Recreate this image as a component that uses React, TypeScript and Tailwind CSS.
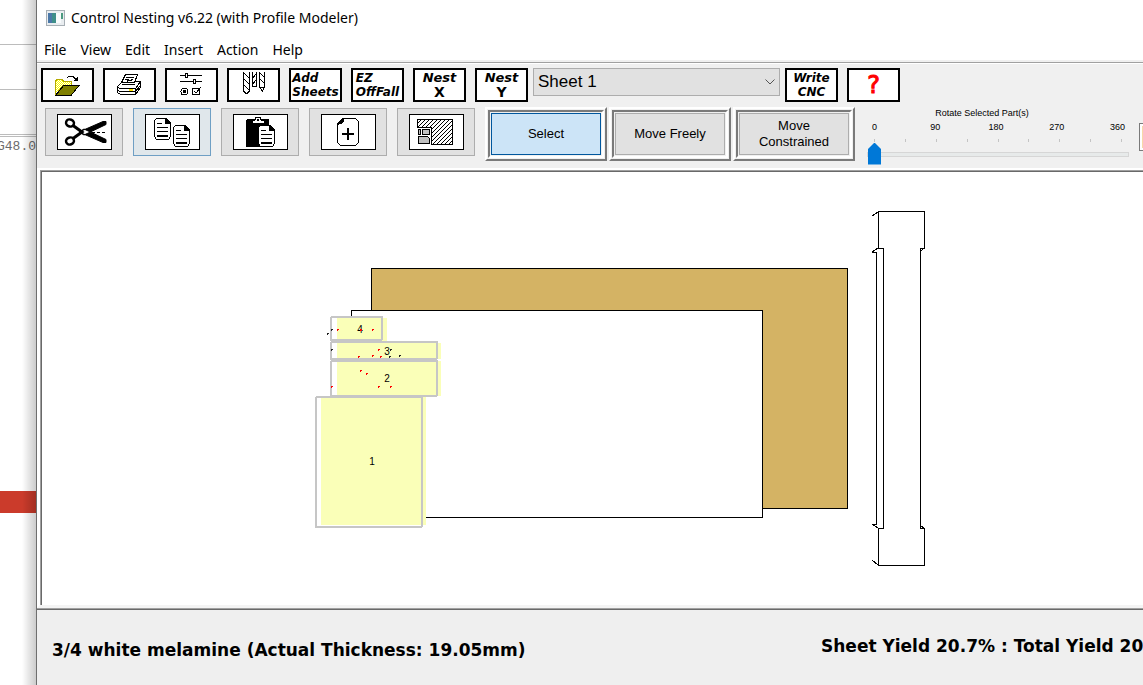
import { useState } from "react";
import type { ReactNode } from "react";

const MENUS = ["File", "View", "Edit", "Insert", "Action", "Help"];
const DEGREES = ["0", "90", "180", "270", "360"];
const TICKS = [0, 1, 2, 3, 4, 5, 6, 7, 8];

const toolBtn = "flex h-[34px] w-[53px] shrink-0 items-center justify-center border-2 border-black bg-white";
const word = "flex flex-col font-['DejaVu_Sans',sans-serif] leading-[14px] font-bold italic";

function AppIcon() {
  return (
    <svg width="19" height="16" viewBox="0 0 19 16" className="shrink-0">
      <rect x="0.5" y="0.5" width="18" height="15" fill="#e9edf0" stroke="#a7afb5" />
      <rect x="2" y="3" width="8" height="10" fill="#3f8f8a" />
      <path d="M2 3h4v10h-4z" fill="#4b78a8" />
      <path d="M10 3h5v10h-5z" fill="#f8fbfc" />
      <rect x="15" y="3" width="2" height="6" fill="#4c9a80" />
    </svg>
  );
}

function OpenIcon() {
  return (
    <svg width="49" height="30" viewBox="0 0 49 30" fill="none" stroke="#000" shapeRendering="crispEdges">
      <defs>
        <pattern id="dither" width="2" height="2" patternUnits="userSpaceOnUse">
          <rect width="2" height="2" fill="#fff" stroke="none" />
          <path d="M0 0h1v1h-1zM1 1h1v1h-1z" fill="#ff0" stroke="none" />
        </pattern>
      </defs>
      <path d="M12.5 25V11l2-2h4l2 2h8v4h-8z" fill="url(#dither)" stroke="#b5aa00" />
      <path d="M12.5 25.5l8-10h15.5l-8 10z" fill="#808000" />
      <path d="M24 8l2-2h4l3 4" />
      <path d="M30 11h5V6z" fill="#000" stroke="none" />
    </svg>
  );
}

function PrintIcon() {
  return (
    <svg width="49" height="30" viewBox="0 0 49 30" fill="none" stroke="#000" shapeRendering="crispEdges">
      <path d="M12.5 16.5l5-5h18v6l-5 7h-15l-3-2z" fill="#fff" />
      <path d="M12.5 16.5l2 2h16l5-7M30.5 18.5v6M12.5 19.5l2 2h16l5-6" />
      <path d="M16.5 12.5l4-8h12l-3 8z" fill="#fff" />
      <path d="M21 7.5h8M20 9.5h4M26 9.5h2M17 14.5h13M19 12.5h3l1-2h4" />
      <rect x="24" y="19" width="4" height="2" fill="#ffe600" stroke="none" />
    </svg>
  );
}

function OptionsIcon() {
  return (
    <svg width="49" height="30" viewBox="0 0 49 30" fill="none" stroke="#000" shapeRendering="crispEdges">
      <path d="M13 5.5h22M13 11.5h22" />
      <rect x="18.5" y="3.5" width="2" height="4" fill="#fff" />
      <rect x="26.5" y="9.5" width="2" height="4" fill="#fff" />
      <circle cx="17.5" cy="21.5" r="3.5" />
      <rect x="16" y="20" width="3" height="3" fill="#000" stroke="none" />
      <rect x="25.5" y="18.5" width="7" height="6" />
      <path d="M27 21l2 2 5-6" />
    </svg>
  );
}

function DrillIcon() {
  return (
    <svg width="49" height="30" viewBox="0 0 49 30" fill="none" stroke="#000" shapeRendering="crispEdges">
      <path d="M14.5 2v19l2 2h2l2-2V2M23.5 2v14.5h4V2M30.5 2v15l3 4 2-4V2" />
      <path d="M15 3l5 5M15 9l5 5M15 15l5 5M27 4l-4 5M27 10l-4 5M31 3l4 4M31 9l4 4M31 17h4" />
    </svg>
  );
}

function CutIcon() {
  return (
    <svg width="53" height="34" viewBox="0 0 53 34" fill="none" stroke="#000">
      <ellipse cx="12" cy="8" rx="4" ry="3.500" strokeWidth="2.500" transform="rotate(20 12 8)" />
      <ellipse cx="12" cy="26" rx="4" ry="3.500" strokeWidth="2.500" transform="rotate(-20 12 26)" />
      <path d="M15 10.500L24 17L15 23.500" strokeWidth="3" />
      <path d="M21 17L45 6.500h3v3L26 20zM21 17L45 27.500h3v-3L26 14z" fill="#000" strokeWidth="1" />
      <path d="M34 17.5h15" strokeDasharray="3 2" shapeRendering="crispEdges" />
    </svg>
  );
}

function Page({ x, y }: { x: number; y: number }) {
  return (
    <g transform={`translate(${x} ${y})`}>
      <path d="M2.5 .5h9l5 5v13l-2 3h-12l-2-3v-16z" fill="#fff" />
      <path d="M11 0v6h6v-1l-5-5z" fill="#000" stroke="none" />
      <path d="M3 5.5h5M3 9.5h11M3 13.5h11M3 17.5h11" />
      <path d="M3 18.5h11" />
    </g>
  );
}

function CopyIcon() {
  return (
    <svg width="53" height="34" viewBox="0 0 53 34" fill="none" stroke="#000" shapeRendering="crispEdges">
      <Page x={8} y={3} />
      <Page x={27} y={10} />
    </svg>
  );
}

function PasteIcon() {
  return (
    <svg width="53" height="34" viewBox="0 0 53 34" fill="none" stroke="#000" shapeRendering="crispEdges">
      <rect x="12" y="4" width="23" height="28" rx="2" fill="#000" stroke="none" />
      <path d="M18 8.5V5h3l1-3h4l1 3h3v3.5z" fill="#fff" />
      <rect x="23" y="4" width="2" height="2" fill="#000" stroke="none" />
      <Page x={24} y={10} />
    </svg>
  );
}

function NewPartIcon() {
  return (
    <svg width="53" height="34" viewBox="0 0 53 34" fill="none" stroke="#000" shapeRendering="crispEdges">
      <path d="M20.5 3.5h13l3 3v21l-3 3h-15l-3-3V8.5z" />
      <path d="M15 10V8l5-5h2v3l-3 3z" fill="#000" stroke="none" />
      <path d="M20 19h12M26 13v12" strokeWidth="2" />
    </svg>
  );
}

function OffcutIcon() {
  return (
    <svg width="53" height="34" viewBox="0 0 53 34" fill="none" stroke="#000" shapeRendering="crispEdges">
      <defs>
        <pattern id="hatch" width="4" height="4" patternUnits="userSpaceOnUse">
          <path d="M0 3h1v1h-1zM1 2h1v1h-1zM2 1h1v1h-1zM3 0h1v1h-1z" fill="#000" stroke="none" />
        </pattern>
      </defs>
      <path d="M7.5 4.5h35v25h-21v-17h-14z" fill="url(#hatch)" />
      <rect x="8.5" y="14.5" width="2" height="5" fill="#c0c0c0" />
      <rect x="12.5" y="14.5" width="7" height="5" fill="#c0c0c0" />
      <path d="M8.5 21.5h9l2 2v5h-11z" fill="#c0c0c0" />
    </svg>
  );
}

function IconButton({ label, hot, children }: { label: string; hot?: boolean; children: ReactNode }) {
  return (
    <button
      aria-label={label}
      className={
        "flex h-12 w-[78px] shrink-0 items-center justify-center border " +
        (hot ? "border-[#6f9fc4] bg-[#e0e7eb]" : "border-[#adadad] bg-[#e1e1e1]")
      }
    >
      <span className="block h-9 w-[55px] border border-black bg-white">{children}</span>
    </button>
  );
}

function ModeButton({ label, active, onClick }: { label: string; active: boolean; onClick: () => void }) {
  return (
    <div className="h-[54px] w-[122px] shrink-0 border-2 border-t-white border-r-[#7a7a7a] border-b-[#7a7a7a] border-l-white p-px">
      <div className="h-full border-2 border-t-[#7a7a7a] border-r-white border-b-white border-l-[#7a7a7a] p-px">
        <button
          aria-pressed={active}
          onClick={onClick}
          className={
            "h-full w-full border px-4 text-[13px] leading-4 " +
            (active ? "border-[#00579e] bg-[#cce4f7]" : "border-[#adadad] bg-[#e1e1e1]")
          }
        >
          {label}
        </button>
      </div>
    </div>
  );
}

const PARTS = [
  { id: 1, x: 274, y: 225, w: 106, h: 130, fx: 279, fw: 105, fy: 224, fh: 129 },
  { id: 2, x: 289, y: 189, w: 106, h: 35, fx: 295, fw: 104, fy: 189, fh: 35 },
  { id: 3, x: 289, y: 170, w: 106, h: 17, fx: 295, fw: 104, fy: 171, fh: 16 },
  { id: 4, x: 289, y: 145, w: 51, h: 23, fx: 295, fw: 50, fy: 146, fh: 23 },
];

// drill points, red = from face
const HOLES = [
  [295, 157], [330, 157], [316, 184], [330, 183], [336, 177], [338, 184],
  [318, 198], [324, 201], [289, 214], [336, 214], [348, 214],
];
const DARK_HOLES = [[285, 161], [289, 157], [289, 177], [347, 184], [348, 177], [357, 183]];

function NestCanvas() {
  return (
    <svg className="block h-[433px] w-full bg-white" fill="none" stroke="#000" shapeRendering="crispEdges">
      <rect x="329.5" y="96.5" width="476" height="240" fill="#d4b364" />
      <rect x="309.5" y="138.5" width="411" height="207" fill="#fff" />
      {PARTS.map(p => (
        <g key={p.id}>
          <rect x={p.x} y={p.y} width={p.fx + p.fw - p.x} height={p.h} fill="#fff" stroke="none" />
          <rect x={p.fx} y={p.fy} width={p.fw} height={p.fh} fill="#faffb8" stroke="none" />
          <rect x={p.x} y={p.y} width={p.w} height={p.h} stroke="#c6c6c6" strokeWidth="2" rx="1" />
        </g>
      ))}
      {HOLES.map(([x, y]) => (
        <path key={`${x}-${y}`} d={`M${x} ${y}h2v1h-1v1h-1z`} fill="#f00" stroke="none" />
      ))}
      {DARK_HOLES.map(([x, y]) => (
        <path key={`${x}-${y}`} d={`M${x} ${y}h2v1h-1v1h-1z`} fill="#222" stroke="none" />
      ))}
      <g fill="#000" stroke="none" fontSize="10" textAnchor="middle">
        <text x="330" y="293">1</text>
        <text x="345" y="210">2</text>
        <text x="345" y="183">3</text>
        <text x="318" y="161">4</text>
      </g>
      <path d="M318 157h2v2h-2z" fill="#f00" stroke="none" />
      <path d="M836.5 39.5h46v37h-4v280h4v37h-46v-37h5v-280h-5zM834.5 80v273" />
      <path d="M830 44l6-4M830 80.5h5M830 80l6-4M830 352.5h5M830 352l6 4M830 388l6 5M879 79l3-3M879 354l3 2" />
    </svg>
  );
}

export default function App() {
  const [mode, setMode] = useState("Select");
  const [angle, setAngle] = useState(0);

  return (
    <div className="flex min-h-screen w-full overflow-hidden bg-white font-['Liberation_Sans',Arial,sans-serif] text-black">
      {/* slice of the editor behind the window */}
      <aside className="relative flex w-9 shrink-0 flex-col overflow-hidden">
        <div className="h-[45px] border-b border-[#bcbcbc]" />
        <div className="h-[45px] border-b border-[#bcbcbc]" />
        <div className="h-[47px] border-b-3 border-double border-[#bcbcbc]" />
        <div className="flex h-5 items-center justify-end font-['Liberation_Mono',monospace] text-[13px] text-[#6b6b6b]">G48.0</div>
        <div className="mt-[334px] h-[22px] bg-[#cb3b2b]" />
        <div className="absolute inset-y-0 right-0 w-3.5 bg-linear-to-r from-transparent to-black/20" />
      </aside>

      <main className="flex min-w-0 flex-1 flex-col border-l border-[#6e6e6e] bg-[#f0f0f0]">
        <header className="bg-white font-['Noto_Sans','Open_Sans',sans-serif] text-sm">
          <div className="flex h-9 items-center gap-1.5 pl-[9px]">
            <AppIcon />
            <h1>Control Nesting v6.22 (with Profile Modeler)</h1>
          </div>
          <nav className="flex h-6 items-end gap-3.5 pl-[7px]">
            {MENUS.map(m => <button key={m}>{m}</button>)}
          </nav>
        </header>

        <div className="h-1 shrink-0 border-b border-white">
          <div className="h-[3px] border-b border-[#a0a0a0]" />
        </div>

        <div className="flex gap-[9px] overflow-hidden pt-1 pl-1">
          <button aria-label="Open" className={toolBtn}><OpenIcon /></button>
          <button aria-label="Print" className={toolBtn}><PrintIcon /></button>
          <button aria-label="Options" className={toolBtn}><OptionsIcon /></button>
          <button aria-label="Tooling" className={toolBtn}><DrillIcon /></button>
          <button className={toolBtn}>
            <span className={word + " text-left text-xs/[14px]"}><span>Add</span><span>Sheets</span></span>
          </button>
          <button className={toolBtn}>
            <span className={word + " text-left text-xs/[14px]"}><span>EZ</span><span>OffFall</span></span>
          </button>
          <button className={toolBtn}>
            <span className={word + " text-[13px]"}><span>Nest</span><span className="text-sm leading-[14px] not-italic">X</span></span>
          </button>
          <button className={toolBtn}>
            <span className={word + " text-[13px]"}><span>Nest</span><span className="text-sm leading-[14px] not-italic">Y</span></span>
          </button>
          <div className="-mx-1 grid h-7 w-[247px] shrink-0 items-center">
            <select
              aria-label="Sheet"
              className="col-start-1 row-start-1 h-7 w-full appearance-none border border-[#adadad] bg-[#e1e1e1] pl-1 text-[17px]"
            >
              <option>Sheet 1</option>
            </select>
            <svg width="10" height="6" viewBox="0 0 10 6" className="pointer-events-none col-start-1 row-start-1 mr-[5px] justify-self-end" fill="none" stroke="#555">
              <path d="M.5 .5L5 5L9.5 .5" />
            </svg>
          </div>
          <button className={toolBtn}>
            <span className={word + " text-xs/[14px]"}><span>Write</span><span>CNC</span></span>
          </button>
          <button aria-label="Help" className={toolBtn + " font-['DejaVu_Sans',sans-serif] text-2xl leading-7 text-[#f00] [-webkit-text-stroke:1px_#f00]"}>?</button>
        </div>

        <div className="flex h-[66px] items-start overflow-hidden pt-[5px] pl-2">
          <div className="flex shrink-0 gap-2.5 pt-px">
            <IconButton label="Cut"><CutIcon /></IconButton>
            <IconButton label="Copy" hot><CopyIcon /></IconButton>
            <IconButton label="Paste"><PasteIcon /></IconButton>
            <IconButton label="New part"><NewPartIcon /></IconButton>
            <IconButton label="Offcut"><OffcutIcon /></IconButton>
          </div>
          <div className="ml-2.5 flex shrink-0 gap-0.5">
            {["Select", "Move Freely", "Move Constrained"].map(m => (
              <ModeButton key={m} label={m} active={mode === m} onClick={() => setMode(m)} />
            ))}
          </div>
          <div className="ml-3 flex w-[262px] shrink-0 flex-col">
            <label htmlFor="rotate" className="pr-8 text-center text-[9px] leading-3">Rotate Selected Part(s)</label>
            <div className="flex justify-between pr-1 text-center text-[9px] leading-4">
              {DEGREES.map(d => <span key={d} className="w-[15px]">{d}</span>)}
            </div>
            <div className="flex justify-between px-[7px] pt-1 pb-px">
              {TICKS.map(t => <span key={t} className="h-[3px] w-px bg-[#c4c4c4]" />)}
            </div>
            <input
              id="rotate"
              type="range"
              min={0}
              max={360}
              value={angle}
              onChange={e => setAngle(Number(e.target.value))}
              className="block h-[22px] w-full appearance-none bg-transparent [&::-webkit-slider-runnable-track]:h-[5px] [&::-webkit-slider-runnable-track]:border [&::-webkit-slider-runnable-track]:border-[#d6d6d6] [&::-webkit-slider-runnable-track]:bg-[#e7eaea] [&::-webkit-slider-thumb]:-mt-[10px] [&::-webkit-slider-thumb]:h-[22px] [&::-webkit-slider-thumb]:w-[13px] [&::-webkit-slider-thumb]:appearance-none [&::-webkit-slider-thumb]:bg-[#0078d7] [&::-webkit-slider-thumb]:[clip-path:polygon(50%_0,100%_30%,100%_100%,0_100%,0_30%)]"
            />
          </div>
          <div className="mt-4 ml-2.5 h-7 w-12 shrink-0 border border-[#7a7a7a] bg-white p-0.5">
            <div className="h-full w-5 bg-[#f7d9a8]" />
          </div>
        </div>

        <section className="border-t-2 border-b border-t-white border-b-[#696969]">
          <div className="border-b border-[#a0a0a0]">
            <div className="border-b-3 border-l-3 border-white border-b-[#f4f4f4]">
              <div className="border-t border-l border-[#a0a0a0]">
                <div className="border-t border-l border-[#696969]">
                  <NestCanvas />
                </div>
              </div>
            </div>
          </div>
        </section>

        <footer className="flex flex-1 items-start overflow-hidden bg-[#efefef] pt-6 pl-[15px] font-['DejaVu_Sans',Verdana,sans-serif] text-[17px] leading-6 font-bold whitespace-nowrap">
          <p className="w-[769px] shrink-0 pt-1">3/4 white melamine (Actual Thickness: 19.05mm)</p>
          <p className="shrink-0">Sheet Yield 20.7% : Total Yield 20.7%</p>
        </footer>
      </main>
    </div>
  );
}
